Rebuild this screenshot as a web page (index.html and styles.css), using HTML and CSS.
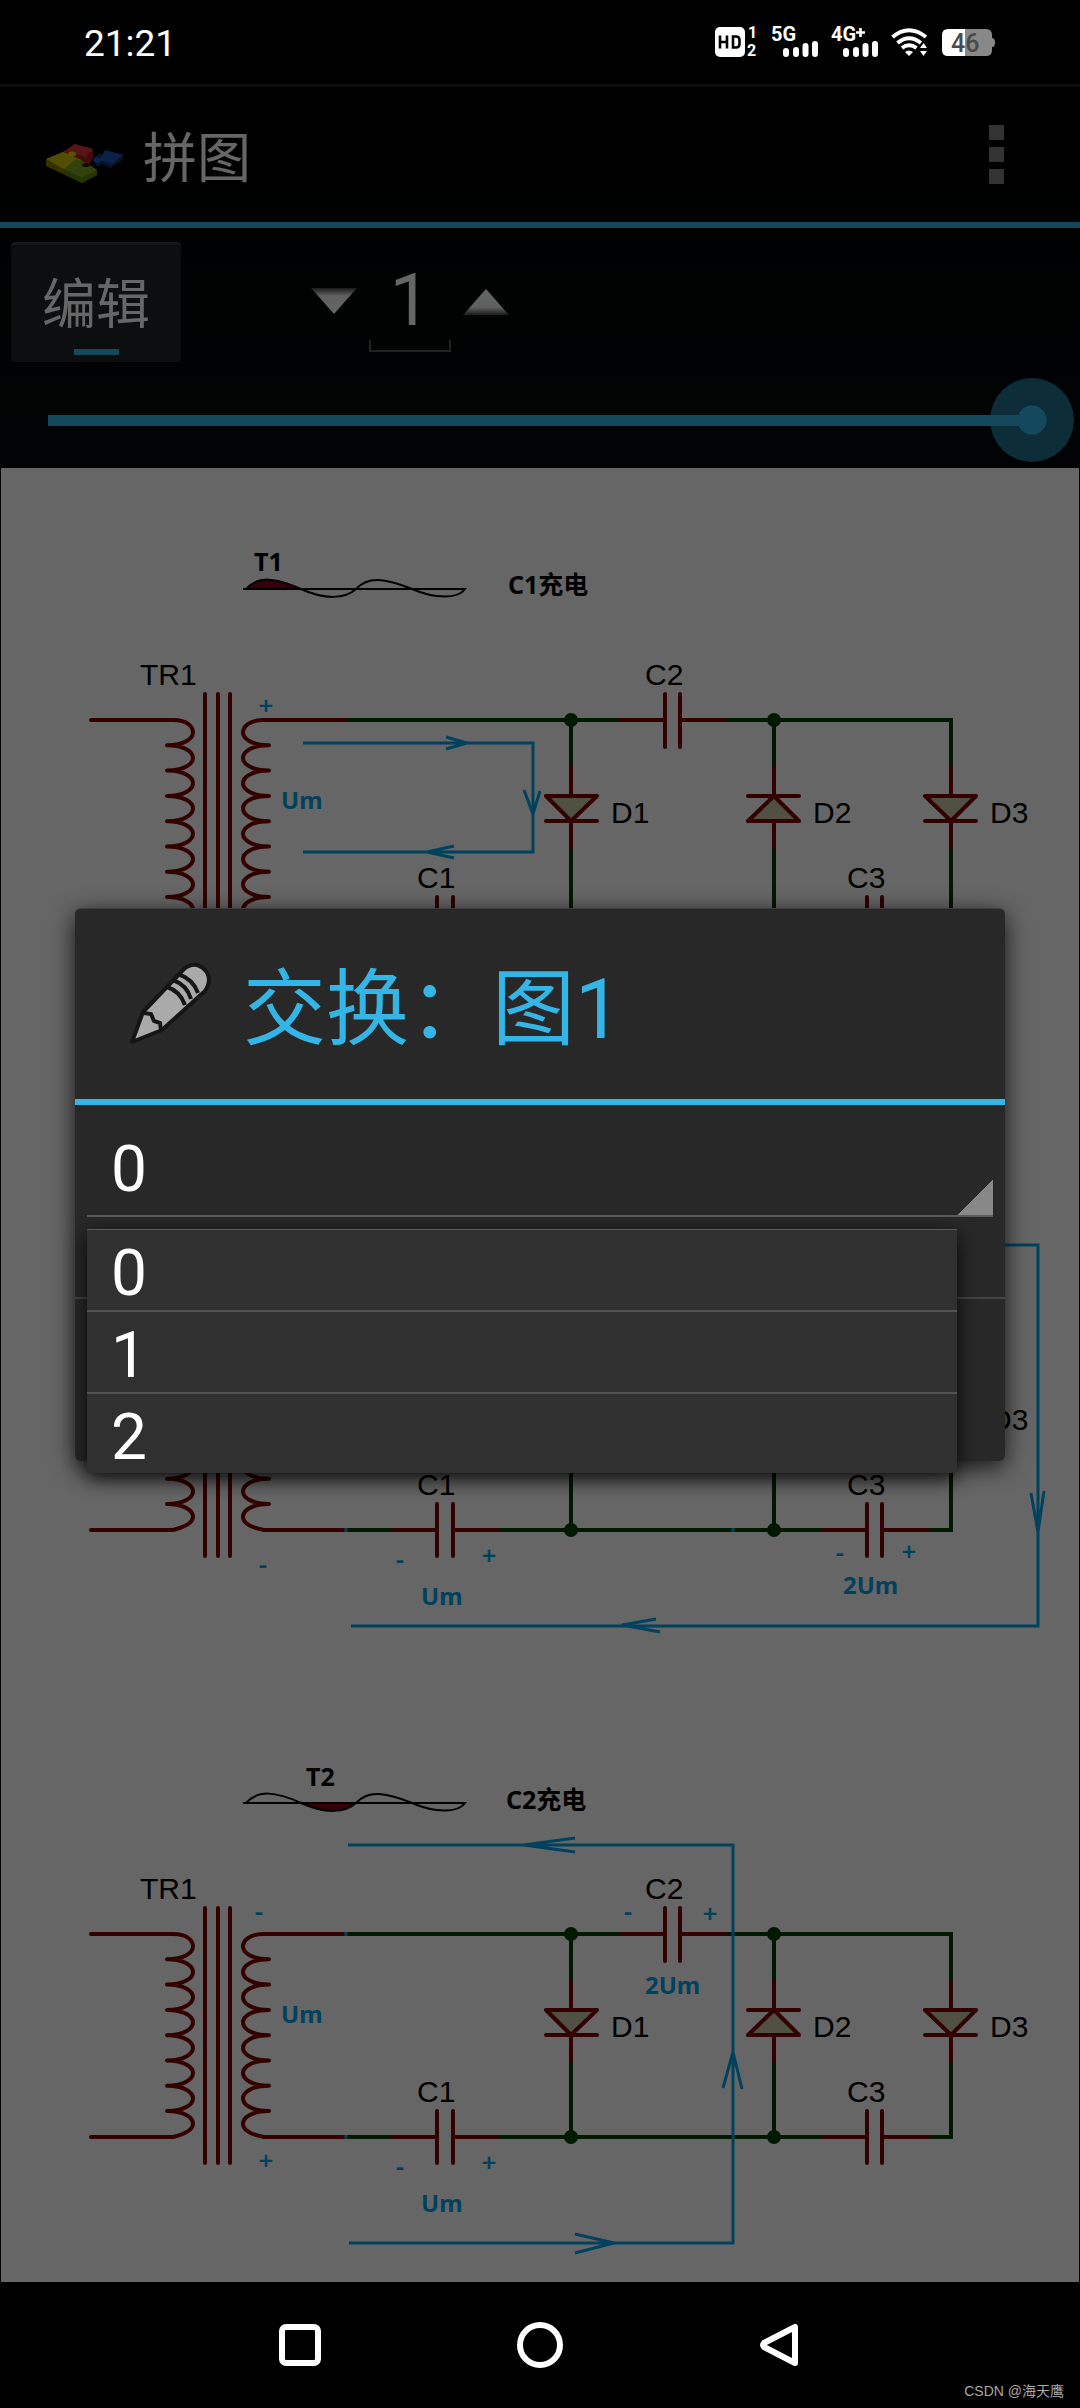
FILE: index.html
```html
<!DOCTYPE html>
<html lang="zh-CN">
<head>
  <meta charset="UTF-8">
  <meta name="viewport" content="width=device-width, initial-scale=1.0">
  <title>拼图</title>
  <link rel="stylesheet" href="styles.css">
</head>
<body>
  <header class="status-bar">
    <span class="clock">21:21</span>
    <div class="status-icons">
      <svg width="44" height="48" viewBox="0 -8 44 48">
        <rect x="0" y="1" width="30" height="30" rx="5" fill="#fff"/>
        <path d="M5 9.500V22.500M12 9.500V22.500M5 16H12M18 10.500V21.500H21Q24.500 21.500 24.500 18V14Q24.500 10.500 21 10.500Z" fill="none" stroke="#000" stroke-width="2.600"/>
        <text x="33" y="12" class="sim">1</text>
        <text x="32" y="30" class="sim">2</text>
      </svg>
      <svg width="48" height="48" viewBox="0 -8 48 48">
        <text x="0" y="15" class="net">5G</text>
        <path d="M15 25V28M25 24V28M34.500 20V28M44 18V28" class="bars"/>
      </svg>
      <svg width="48" height="48" viewBox="0 -8 48 48">
        <text x="0" y="15" class="net">4G</text>
        <path d="M25 6.500H34M29.500 2V11" stroke="#fff" stroke-width="2.600"/>
        <path d="M15 25V28M25 24V28M34.500 20V28M44 18V28" class="bars"/>
      </svg>
      <svg width="38" height="48" viewBox="0 -8 38 48">
        <g fill="none" stroke="#fff" stroke-width="4">
          <path d="M1.500 11Q18 -2.500 35 11"/>
          <path d="M6.500 17Q18 7.500 30 17"/>
          <path d="M11 22Q18 16.500 25.500 22"/>
        </g>
        <path d="M14 26Q18 23 22 26L18 30ZM29 22L32.500 17L36 22ZM29 25H36L32.500 30Z" fill="#fff"/>
      </svg>
      <svg width="55" height="48" viewBox="0 -8 55 48">
        <path d="M7 3H24V30H7Q1 30 1 24V9Q1 3 7 3Z" fill="#fff"/>
        <path d="M24 3H45Q51 3 51 9V12Q54 12 54 16.500T51 21V24Q51 30 45 30H24Z" fill="#888"/>
        <text x="10" y="26" class="battery">46</text>
      </svg>
    </div>
  </header>

  <main class="app">
    <div class="action-bar">
      <svg class="logo" width="78" height="40" viewBox="0 0 78 40">
        <path d="M16 10L30 2L48 7V15L44 22L26 18L16 12Z" fill="#a81c20"/>
        <path d="M18 9L30 1L48 6L41 14L30 11Z" fill="#d8383c"/>
        <path d="M1 16L18 9L35 16L52 27V32L37 40L1 23Z" fill="#8a7a00"/>
        <path d="M1 16L18 9L36 17L30 24L19 26Z" fill="#d2c20a"/>
        <path d="M19 26L31 16L43 21L52 27L37 35Z" fill="#78a41c"/>
        <path d="M37 35L52 27V32L37 40L19 31V26Z" fill="#5c8014"/>
        <ellipse cx="27" cy="11" rx="4" ry="2.500" fill="#e0cc10"/>
        <path d="M49 15L54 10L58 12L60 7L78 12L77 17L65 25L57 21L52 24Z" fill="#0c3474"/>
        <path d="M60 7L78 12L67 21L55 17Z" fill="#1c54b4"/>
        <ellipse cx="52" cy="17" rx="4" ry="3" fill="#1c54b4"/>
        <ellipse cx="41" cy="22" rx="4" ry="2" fill="#222"/>
      </svg>
      <h1 class="app-title">拼图</h1>
      <button class="overflow" type="button" aria-label="更多">
        <span></span><span></span><span></span>
      </button>
    </div>

    <div class="toolbar">
      <button class="toggle" type="button">编辑</button>
      <div class="stepper">
        <button type="button" aria-label="减">
          <svg width="46" height="28" viewBox="0 0 46 28"><defs><linearGradient id="down" x2="0" y2="1"><stop offset="0" stop-color="#444"/><stop offset=".3" stop-color="#eee"/><stop offset="1" stop-color="#fff"/></linearGradient></defs><path d="M0 0H46L23 26Z" fill="url(#down)"/></svg>
        </button>
        <input type="text" value="1" aria-label="数量">
        <button type="button" aria-label="加">
          <svg width="46" height="28" viewBox="0 0 46 28"><defs><linearGradient id="up" x2="0" y2="1"><stop offset="0" stop-color="#fff"/><stop offset=".7" stop-color="#eee"/><stop offset="1" stop-color="#444"/></linearGradient></defs><path d="M0 27H46L23 1Z" fill="url(#up)"/></svg>
        </button>
      </div>
    </div>
    <input class="slider" type="range" min="0" max="100" value="100" aria-label="缩放">

    <div class="picture">
      <svg viewBox="1 0 1078 1814">
        <defs>
          <!-- one rectifier stage, repeated for every tile -->
          <g id="circuit">
            <g class="wire">
              <path d="M346 252H621M725 252H951V300M571 252V300M774 252V300M571 379V455M774 379V455M951 379V455H928M346 455H393M497 455H823"/>
            </g>
            <g class="part">
              <path d="M621 252H665M680 252H725M393 455H437M453 455H497M823 455H867M882 455H928"/>
              <path d="M571 300V379M774 300V379M951 300V379"/>
              <path d="M205 226V481M218 226V481M230 226V481M665 226V279M680 226V279M437 429V481M453 429V481M867 429V481M882 429V481"/>
              <path d="M91 252H173c15 0 20 7 20 12.600s-8 12.700 -26 12.700c18 0 26 7 26 12.600s-8 12.700 -26 12.700c18 0 26 7 26 12.600s-8 12.700 -26 12.700c18 0 26 7 26 12.600s-8 12.700 -26 12.700c18 0 26 7 26 12.600s-8 12.700 -26 12.700c18 0 26 7 26 12.600s-8 12.700 -26 12.700c18 0 26 7 26 12.600s-8 12.700 -26 12.700c18 0 26 7 26 12.600s-7 10 -20 13.300H91"/>
              <path d="M346 252H264c-15 0 -21 7 -21 12.600s8 12.700 26 12.700c-18 0 -26 7 -26 12.600s8 12.700 26 12.700c-18 0 -26 7 -26 12.600s8 12.700 26 12.700c-18 0 -26 7 -26 12.600s8 12.700 26 12.700c-18 0 -26 7 -26 12.600s8 12.700 26 12.700c-18 0 -26 7 -26 12.600s8 12.700 26 12.700c-18 0 -26 7 -26 12.600s8 12.700 26 12.700c-18 0 -26 7 -26 12.600s7 11 21 13.300H346"/>
              <path class="diode" d="M546 328H597L571 353ZM546 353H597M748 353H799L774 328ZM748 328H799M925 328H976L951 353ZM925 353H976"/>
            </g>
            <g class="node">
              <circle cx="571" cy="252" r="7"/><circle cx="774" cy="252" r="7"/>
              <circle cx="571" cy="455" r="7"/><circle cx="774" cy="455" r="7"/>
            </g>
          </g>
          <path id="wave" d="M243 121H465C458 131 435 131 412 121C385 110 368 108 356 121C345 131 325 132 301 121C275 109 258 108 246 121"/>
        </defs>

        <!-- tile 1 -->
        <g>
          <path class="half" d="M246 121C258 108 275 109 301 121Z"/>
          <use href="#wave" class="wave"/>
          <use href="#circuit"/>
          <path class="flow" d="M303 275H533V384H303M446 269L467 275L446 281M524 322L533 346L540 323M454 378L427 384L454 390"/>
          <g class="caption"><text x="254" y="103">T1</text><text x="508" y="126">C1充电</text></g>
          <g class="name"><text x="140" y="217">TR1</text><text x="645" y="217">C2</text><text x="417" y="420">C1</text><text x="847" y="420">C3</text><text x="611" y="355">D1</text><text x="813" y="355">D2</text><text x="990" y="355">D3</text></g>
          <g class="volt"><text x="281" y="341">Um</text></g>
          <g class="sign"><text x="266" y="247">+</text></g>
        </g>

        <!-- tile 2 -->
        <g transform="translate(0 607)">
          <use href="#circuit"/>
          <path class="flow" d="M351 170H1038V551H351M656 544L622 550L660 557M1031 418L1038 457L1044 416M346 453V457M733 453V457"/>
          <g class="name"><text x="417" y="420">C1</text><text x="847" y="420">C3</text><text x="990" y="355">D3</text></g>
          <g class="volt"><text x="421" y="530">Um</text><text x="843" y="519">2Um</text></g>
          <g class="sign"><text x="263" y="498">-</text><text x="400" y="493">-</text><text x="489" y="490">+</text><text x="840" y="486">-</text><text x="909" y="486">+</text></g>
        </g>

        <!-- tile 3 -->
        <g transform="translate(0 1214)">
          <path class="half" d="M301 121C325 132 345 131 356 121Z"/>
          <use href="#wave" class="wave"/>
          <use href="#circuit"/>
          <path class="flow" d="M348 163H733V561H349M575 156L524 163L575 170M723 406L733 370L742 407M575 552L614 561L575 571M346 250V254M346 453V457"/>
          <g class="caption"><text x="306" y="104">T2</text><text x="506" y="127">C2充电</text></g>
          <g class="name"><text x="140" y="217">TR1</text><text x="645" y="217">C2</text><text x="417" y="420">C1</text><text x="847" y="420">C3</text><text x="611" y="355">D1</text><text x="813" y="355">D2</text><text x="990" y="355">D3</text></g>
          <g class="volt"><text x="281" y="341">Um</text><text x="421" y="530">Um</text><text x="645" y="312">2Um</text></g>
          <g class="sign"><text x="259" y="238">-</text><text x="266" y="488">+</text><text x="400" y="493">-</text><text x="489" y="490">+</text><text x="628" y="238">-</text><text x="710" y="241">+</text></g>
        </g>
      </svg>
    </div>

    <div class="scrim">
      <section class="dialog" role="dialog" aria-labelledby="dialog-title">
        <div class="dialog-head">
          <svg width="84" height="84" viewBox="0 0 84 84">
            <path d="M3 80L14 50L55 7Q66 -2 76 8Q84 17 76 29L33 68Z" fill="#aaa" stroke="#151515" stroke-width="4" stroke-linejoin="round"/>
            <path d="M15 51L22 52L25 59L31 61L32 68M38 25Q51 29 56 43M44 18Q58 23 62 37M49 12Q64 17 69 31" fill="none" stroke="#151515" stroke-width="4"/>
          </svg>
          <h2 id="dialog-title">交换：图1</h2>
        </div>
        <div class="dialog-body">
          <select class="spinner" aria-label="交换目标">
            <option>0</option>
            <option>1</option>
            <option>2</option>
          </select>
          <ul class="dropdown" role="listbox">
            <li role="option">0</li>
            <li role="option">1</li>
            <li role="option">2</li>
          </ul>
        </div>
        <div class="dialog-buttons"></div>
      </section>
    </div>
  </main>

  <nav class="nav-bar">
    <button type="button" aria-label="最近任务"><svg width="48" height="48" viewBox="0 0 48 48"><rect x="6" y="6" width="36" height="36" rx="4"/></svg></button>
    <button type="button" aria-label="主页"><svg width="48" height="48" viewBox="0 0 48 48"><circle cx="24" cy="24" r="20"/></svg></button>
    <button type="button" aria-label="返回"><svg width="48" height="48" viewBox="0 0 48 48"><path d="M39 6V42L8 26Q6 24 8 22Z"/></svg></button>
    <span class="watermark">CSDN @海天鹰</span>
  </nav>
</body>
</html>
```

FILE: styles.css
```css
* { box-sizing: border-box; }
body { margin: 0; min-height: 100vh; display: flex; flex-direction: column; background: #000; color: #fff; font-family: Roboto, "Noto Sans CJK SC", sans-serif; }
button { margin: 0; padding: 0; border: none; background: none; color: inherit; font: inherit; }
h1, h2 { margin: 0; font-weight: 400; }
svg { display: block; }

/* status bar */
.status-bar { height: 87px; padding: 0 84px; display: flex; justify-content: space-between; align-items: center; border-bottom: 3px solid #0c0c0c; }
.clock { font-size: 37px; line-height: 44px; padding-top: 4px; }
.status-icons { display: flex; gap: 12px; }
.sim { font: 700 16px Roboto, sans-serif; fill: #fff; }
.net { font: 700 20px Roboto, sans-serif; fill: #fff; }
.battery { font: 500 25px Roboto, sans-serif; fill: #4a4a4a; }
.bars { stroke: #fff; stroke-width: 6; stroke-linecap: round; fill: none; }

/* app behind the dialog */
.app { position: relative; background: linear-gradient(#000, #070c0e 460px); }
.action-bar { height: 141px; padding: 0 76px 0 45px; display: flex; align-items: center; border-bottom: 6px solid #33b5e5; }
.logo { margin-top: 16px; }
.app-title { margin-left: 20px; padding-top: 11px; font-size: 54px; line-height: 64px; }
.overflow { margin-left: auto; display: flex; flex-direction: column; gap: 7px; }
.overflow span { width: 15px; height: 15px; background: #808080; }
.toolbar { display: flex; padding: 14px 11px 0; }
.toggle { width: 170px; height: 120px; padding-top: 4px; border-radius: 4px; border-top: 3px solid #363a3e; font-size: 54px; line-height: 64px; background: linear-gradient(#33b5e5, #33b5e5) no-repeat 50% 104px / 45px 6px, #202428; }
.stepper { margin-left: 124px; display: flex; align-items: center; gap: 6px; }
.stepper button { width: 58px; display: flex; justify-content: center; }
.stepper input { width: 82px; height: 100px; padding: 0 0 4px; border: none; color: #fff; font: 400 72px Roboto, sans-serif; text-align: center; background: linear-gradient(#555, #555) no-repeat 0 100% / 100% 2px, linear-gradient(#555, #555) no-repeat 0 100% / 2px 12px, linear-gradient(#555, #555) no-repeat 100% 100% / 2px 12px; }
.slider { -webkit-appearance: none; appearance: none; display: block; width: calc(100% - 12px); height: 96px; margin: 10px 6px 0; background: none; }
.slider::-webkit-slider-runnable-track { height: 84px; background: linear-gradient(#33b5e5, #33b5e5) no-repeat 42px 50% / calc(100% - 84px) 11px; }
.slider::-webkit-slider-thumb { -webkit-appearance: none; width: 84px; height: 84px; border-radius: 50%; background: radial-gradient(circle, #33b5e5 14px, rgba(51, 181, 229, 0.6) 15px); }

/* stitched picture */
.picture { margin: 0 1px; background: #fff; }
.picture svg { width: 100%; height: auto; }
.wire { fill: none; stroke: #004000; stroke-width: 4; }
.node { fill: #004000; }
.part { fill: none; stroke: #800000; stroke-width: 4; stroke-linecap: round; stroke-linejoin: round; }
.diode { fill: #c8c8a8; }
.wave { fill: none; stroke: #000; stroke-width: 2; }
.half { fill: #880015; }
.flow { fill: none; stroke: #00a2e8; stroke-width: 3; }
.name { font: 400 30px "Liberation Sans", Arial, sans-serif; }
.caption { font: 700 25px "Noto Sans", "Noto Sans CJK SC", sans-serif; }
.volt { font: 700 24px "Noto Sans", sans-serif; fill: #00a2e8; }
.sign { font: 600 26px "Noto Sans", sans-serif; fill: #00a2e8; text-anchor: middle; }

/* dialog */
.scrim { position: absolute; inset: 0; display: flex; align-items: center; justify-content: center; padding: 0 75px; background: rgba(0, 0, 0, 0.6); }
.dialog { width: 100%; background: #282828; border-radius: 6px; border-top: 1px solid #3c3c3c; box-shadow: 0 6px 24px rgba(0, 0, 0, 0.8); }
.dialog-head { display: flex; align-items: center; gap: 30px; height: 196px; padding: 0 54px; border-bottom: 6px solid #33b5e5; color: #33b5e5; }
.dialog-head h2 { padding-top: 12px; font-size: 83px; line-height: 100px; }
.dialog-body { position: relative; height: 194px; padding: 0 12px; border-bottom: 2px solid #444; }
.spinner { -webkit-appearance: none; appearance: none; display: block; width: 100%; height: 112px; padding: 18px 24px 0; border: none; border-bottom: 2px solid #5c5c5c; border-radius: 0; color: #fff; font: 400 64px Roboto, sans-serif; background: linear-gradient(135deg, transparent 50%, #888 50%) no-repeat 100% 100% / 36px 36px; }
.dropdown { position: absolute; top: 124px; left: 12px; right: 48px; margin: 0; padding: 0; list-style: none; background: #303030; border-top: 1px solid #5c5c5c; border-radius: 0 0 6px 6px; box-shadow: 0 6px 20px rgba(0, 0, 0, 0.8); }
.dropdown li { height: 82px; padding: 6px 24px 0; font-size: 64px; line-height: 76px; border-bottom: 2px solid #525252; }
.dropdown li:last-child { height: 79px; border-bottom: none; }
.dialog-buttons { height: 162px; }

/* navigation bar */
.nav-bar { position: relative; flex: 1; min-height: 126px; display: flex; justify-content: center; align-items: center; gap: 192px; }
.nav-bar svg { fill: none; stroke: #fff; stroke-width: 6; stroke-linejoin: round; }
.watermark { position: absolute; right: 16px; bottom: 8px; font: 400 14px/18px "Liberation Sans", "Noto Sans CJK SC", sans-serif; color: #a8a8a8; }
```
